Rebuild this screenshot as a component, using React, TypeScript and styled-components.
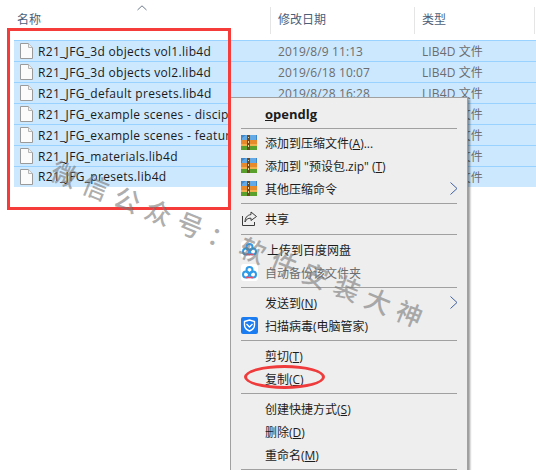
import React from 'react'
import styled, { createGlobalStyle } from 'styled-components'

const GlobalStyle = createGlobalStyle`
	html, body {
		margin: 0;
		padding: 0;
		background: #fff;
	}
	body {
		width: 536px;
		height: 470px;
		overflow: hidden;
		font-family: 'Open Sans', 'Noto Sans CJK SC', sans-serif;
		font-size: 12px;
	}
`

const Page = styled.div`
	position: relative;
	width: 536px;
	height: 470px;
	overflow: hidden;
`

const Header = styled.div`
	position: relative;
	height: 40px;
	box-sizing: border-box;
	padding-top: 7px;
	display: grid;
	grid-template-columns: 271px 144px 120px 1px;
	color: #4c607a;
`

const HeaderCell = styled.div<{ $pad: number }>`
	height: 27px;
	box-sizing: border-box;
	padding-left: ${props => props.$pad}px;
	line-height: 26px;
	border-right: 1px solid #e5e5e5;
`

const SortArrow = styled.svg`
	position: absolute;
	left: 137px;
	top: 5px;
`

const List = styled.div`
	padding-left: 14px;
	display: flex;
	flex-direction: column;
`

const Row = styled.div`
	height: 21px;
	box-sizing: border-box;
	display: grid;
	grid-template-columns: 257px 144px 1fr;
	align-items: center;
	background: #cce8ff;
	border-top: 1px solid #99d1ff;
	&:last-child {
		border-bottom: 1px solid #cce8ff;
	}
`

const NameCell = styled.div`
	display: flex;
	align-items: center;
	gap: 5px;
	padding-left: 6px;
	color: #1a1a1a;
	letter-spacing: 0.31px;
	white-space: nowrap;
	overflow: hidden;

	svg {
		flex: none;
	}
`

const DimCell = styled.div`
	color: #6d6d6d;
	padding-left: 7px;
	letter-spacing: 0.1px;
	white-space: nowrap;
`

const Menu = styled.div`
	position: absolute;
	left: 230px;
	top: 97px;
	width: 238px;
	height: 380px;
	box-sizing: border-box;
	padding-top: 4px;
	background: #eeeeee;
	border: 1px solid #a0a0a0;
	box-shadow: 2px 2px 2px rgba(0, 0, 0, 0.4);
	color: #1c1c1c;
`

const Item = styled.div<{ $shift?: number; $dim?: boolean; $bold?: boolean }>`
	position: relative;
	height: 23px;
	display: flex;
	align-items: center;
	padding-left: ${props => 34 + (props.$shift || 0)}px;
	color: ${props => (props.$dim ? '#6d6d6d' : 'inherit')};
	font-weight: ${props => (props.$bold ? 700 : 400)};
	font-size: ${props => (props.$bold ? 13 : 12)}px;
	white-space: pre;
`

const IconSlot = styled.span`
	position: absolute;
	left: 10px;
	top: 3px;
	width: 17px;
	height: 17px;
	display: flex;
`

const Chevron = styled.svg`
	position: absolute;
	right: 9px;
	top: 5px;
`

const Separator = styled.div<{ $h?: number }>`
	height: ${props => props.$h || 7}px;
	display: flex;
	align-items: center;
	padding: 0 10px;
	&::after {
		content: '';
		flex: 1;
		height: 1px;
		background: #a0a0a0;
	}
`

const Key = styled.span`
	text-decoration: underline;
`

const RedBox = styled.div`
	position: absolute;
	left: 7px;
	top: 28px;
	width: 224px;
	height: 182px;
	box-sizing: border-box;
	border: 3px solid #f63b3b;
	pointer-events: none;
`

const RedRing = styled.div`
	position: absolute;
	left: 244px;
	top: 365px;
	width: 81px;
	height: 24px;
	box-sizing: border-box;
	border: 3px solid #ef3b3b;
	border-radius: 50%;
	pointer-events: none;
`

const Watermark = styled.div`
	position: absolute;
	left: 60px;
	top: 151px;
	display: flex;
	gap: 7.8px;
	transform: rotate(22deg);
	transform-origin: 0 0;
	font-family: 'Noto Sans CJK SC', sans-serif;
	font-size: 26px;
	font-weight: 500;
	color: rgba(120, 120, 120, 0.6);
	white-space: nowrap;
	pointer-events: none;
`

const FileIcon = () => (
	<svg width="13" height="16" viewBox="0 0 13 16" fill="none">
		<path d="M.5.500h8l4 4v11H.5z" fill="#fbfbfb" stroke="#9a9a9a" />
		<path d="M8.500.500v4h4" fill="#f0f0f0" stroke="#b5b5b5" />
	</svg>
)

const RarIcon = () => (
	<svg width="17" height="17" viewBox="0 0 17 17">
		<rect x="0" y="1" width="16" height="5" fill="#3f86c9" />
		<path d="M1 4 5 1h10v5H1z" fill="#63a9e6" />
		<rect x="0" y="6" width="16" height="4" fill="#e78a2b" />
		<rect x="0" y="10" width="16" height="2" fill="#f0b04d" />
		<rect x="0" y="12" width="16" height="4" fill="#5aa02c" />
		<rect x="6" y="1" width="3" height="15" fill="#6b4a24" />
		<rect x="7" y="3" width="1" height="1" fill="#e8d8a8" />
		<rect x="7" y="7" width="1" height="2" fill="#e8d8a8" />
		<rect x="7" y="11" width="1" height="2" fill="#e8d8a8" />
	</svg>
)

const ShareIcon = () => (
	<svg width="17" height="17" viewBox="0 0 17 17" fill="none" stroke="#3a3a3a">
		<path d="M1.500 6v9.500h12V12" />
		<path d="M10 2 15.500 6.500 10 10.500V8.200C7 8 5 9.500 4 12 4 8 6 5 10 4.600z" />
	</svg>
)

const CloudIcon = () => (
	<svg width="17" height="17" viewBox="0 0 17 17" fill="none">
		<rect width="17" height="17" rx="3" fill="#fff" />
		<circle cx="8.500" cy="6" r="3" stroke="#2f9be8" strokeWidth="2" />
		<circle cx="5" cy="10.500" r="3" stroke="#2f9be8" strokeWidth="2" />
		<circle cx="12" cy="10.500" r="3" stroke="#2f9be8" strokeWidth="2" />
		<path d="M5 13.500h7" stroke="#e8506a" strokeWidth="1.600" />
	</svg>
)

const ShieldIcon = () => (
	<svg width="17" height="17" viewBox="0 0 17 17" fill="none">
		<rect width="17" height="17" rx="2" fill="#1a7cf0" />
		<path d="M3.500 4.500 8.500 3l5 1.500V8c0 3-2.500 5-5 6-2.500-1-5-3-5-6z" stroke="#fff" strokeWidth="1.400" />
		<path d="M5.500 7 8.500 10l3-3" stroke="#fff" strokeWidth="1.400" />
	</svg>
)

const ChevronIcon = () => (
	<Chevron width="8" height="13" viewBox="0 0 8 13" fill="none" stroke="#40609c">
		<path d="M.5.500 7 6.500 .5 12.500" />
	</Chevron>
)

const files = [
	['R21_JFG_3d objects vol1.lib4d', '2019/8/9 11:13'],
	['R21_JFG_3d objects vol2.lib4d', '2019/6/18 10:07'],
	['R21_JFG_default presets.lib4d', '2019/8/28 16:28'],
	['R21_JFG_example scenes - discipline.lib4d', '2019/8/28 16:30'],
	['R21_JFG_example scenes - feature.lib4d', '2019/8/28 16:31'],
	['R21_JFG_materials.lib4d', '2019/8/28 16:33'],
	['R21_JFG_presets.lib4d', '2019/8/28 16:35'],
]

const App: React.FC = () => {
	return (
		<Page>
			<GlobalStyle />
			<Header>
				<HeaderCell $pad={17}>名称</HeaderCell>
				<HeaderCell $pad={7}>修改日期</HeaderCell>
				<HeaderCell $pad={7}>类型</HeaderCell>
				<SortArrow width="10" height="6" viewBox="0 0 10 6" fill="none" stroke="#6d7a8a">
					<path d="M.5 5 5 .8 9.500 5" />
				</SortArrow>
			</Header>
			<List>
				{files.map(([name, date]) => (
					<Row key={name}>
						<NameCell><FileIcon />{name}</NameCell>
						<DimCell>{date}</DimCell>
						<DimCell>LIB4D 文件</DimCell>
					</Row>
				))}
			</List>
			<Menu>
				<Item $bold><span><Key>o</Key>pendlg</span></Item>
				<Separator $h={6} />
				<Item><IconSlot><RarIcon /></IconSlot><span>添加到压缩文件(<Key>A</Key>)...</span></Item>
				<Item><IconSlot><RarIcon /></IconSlot><span>添加到 "预设包.zip" (<Key>T</Key>)</span></Item>
				<Item><IconSlot><RarIcon /></IconSlot><span>其他压缩命令</span><ChevronIcon /></Item>
				<Separator />
				<Item><IconSlot><ShareIcon /></IconSlot><span>共享</span></Item>
				<Separator $h={8} />
				<Item $shift={2}><IconSlot><CloudIcon /></IconSlot><span>上传到百度网盘</span></Item>
				<Item $dim><IconSlot><CloudIcon /></IconSlot><span>自动备份该文件夹</span></Item>
				<Separator />
				<Item><span>发送到(<Key>N</Key>)</span><ChevronIcon /></Item>
				<Item><IconSlot><ShieldIcon /></IconSlot><span>扫描病毒(电脑管家)</span></Item>
				<Separator />
				<Item><span>剪切(<Key>T</Key>)</span></Item>
				<Item><span>复制(<Key>C</Key>)</span></Item>
				<Separator />
				<Item><span>创建快捷方式(<Key>S</Key>)</span></Item>
				<Item><span>删除(<Key>D</Key>)</span></Item>
				<Item><span>重命名(<Key>M</Key>)</span></Item>
				<Separator />
			</Menu>
			<RedBox />
			<RedRing />
			<Watermark>
				{'微信公众号：软件安装大神'.split('').map((ch, i) => <span key={i}>{ch}</span>)}
			</Watermark>
		</Page>
	)
}

export default App
